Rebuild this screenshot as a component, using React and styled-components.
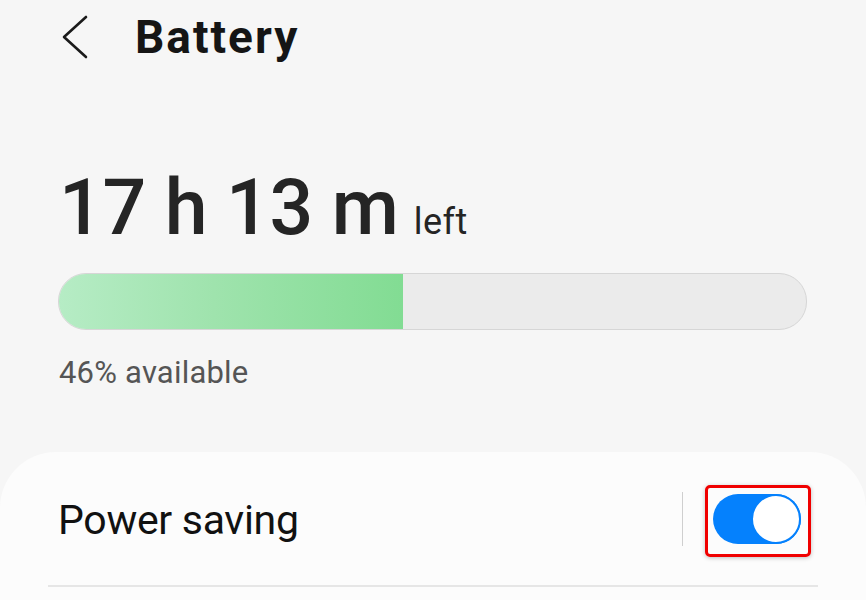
import React from 'react'
import styled, { createGlobalStyle } from 'styled-components'

const GlobalStyle = createGlobalStyle`
html, body {
    margin: 0;
    padding: 0;
    background: #f6f6f6;
    font-family: Roboto, "Liberation Sans", sans-serif;
}
`

const Page = styled.div`
width: 866px;
height: 600px;
overflow: hidden;
display: flex;
flex-direction: column;
background: #f6f6f6;
`

const Header = styled.header`
display: flex;
align-items: center;
height: 74px;
padding-left: 62px;
`

const BackButton = styled.button`
border: 0;
background: none;
padding: 0;
width: 26px;
height: 44px;
display: flex;
align-items: center;
margin-right: 47px;
svg {
    display: block;
}
`

const Title = styled.h1`
margin: 0;
font-size: 46px;
font-weight: 700;
letter-spacing: 2px;
color: #151515;
line-height: 1;
`

const Summary = styled.section`
padding: 96px 58px 0 59px;
`

const Remaining = styled.div`
display: flex;
align-items: baseline;
color: #252525;
line-height: 1;
`

const Big = styled.span`
font-size: 77px;
font-weight: 500;
letter-spacing: -0.3px;
`

const Small = styled.span`
font-size: 36px;
font-weight: 400;
margin-left: 15px;
letter-spacing: 0.5px;
`

const Bar = styled.div`
margin-top: 26px;
height: 55px;
border-radius: 28px;
border: 1px solid #d6d6d6;
background: #ebebeb;
overflow: hidden;
width: 747px;
margin-left: -1px;
`

const Fill = styled.div`
height: 100%;
background: linear-gradient(90deg, #b6ecc5 0%, #9fe3ad 45%, #82dc93 100%);
`

const Available = styled.p`
margin: 24px 0 0;
font-size: 31px;
line-height: 1.2;
color: #555;
letter-spacing: 0.2px;
`

const Card = styled.section`
margin-top: auto;
height: 148px;
background: #fcfcfc;
border-radius: 56px 56px 0 0;
padding: 0 48px;
`

const Row = styled.div`
display: flex;
align-items: center;
height: 133px;
padding: 0 7px 0 10px;
border-bottom: 2px solid #e6e6e6;
`

const Label = styled.span`
flex: 1;
font-size: 41px;
color: #111;
letter-spacing: -0.3px;
padding-top: 3px;
`

const Separator = styled.span`
width: 1px;
height: 54px;
background: #cfcfcf;
margin-right: 22px;
`

const Highlight = styled.div`
padding: 6px 7px 10px 5px;
border: 3px solid #f00000;
border-radius: 5px;
box-shadow: 0 1px 4px rgba(0, 0, 0, 0.25);
display: flex;
margin-top: 4px;
`

const Track = styled.div`
position: relative;
width: 88px;
height: 50px;
border-radius: 25px;
background: ${({ on }) => (on ? '#0581fd' : '#cfcfcf')};
`

const Thumb = styled.span`
position: absolute;
top: 0;
right: ${({ on }) => (on ? '0' : 'auto')};
left: ${({ on }) => (on ? 'auto' : '0')};
width: 50px;
height: 50px;
box-sizing: border-box;
border-radius: 50%;
background: #fff;
border: 2.5px solid #0581fd;
`

const ChevronLeft = () => (
    <svg width="26" height="44" viewBox="0 0 26 44">
        <polyline points="24,2 2,22 24,42" fill="none" stroke="#1a1a1a" strokeWidth="2.6" strokeLinecap="round" strokeLinejoin="round" />
    </svg>
)

const App = () => {
    const level = 46
    return (
        <Page>
            <GlobalStyle />
            <Header>
                <BackButton aria-label="Back">
                    <ChevronLeft />
                </BackButton>
                <Title>Battery</Title>
            </Header>
            <Summary>
                <Remaining>
                    <Big>17 h 13 m</Big>
                    <Small>left</Small>
                </Remaining>
                <Bar>
                    <Fill style={{ width: `${level}%` }} />
                </Bar>
                <Available>{level}% available</Available>
            </Summary>
            <Card>
                <Row>
                    <Label>Power saving</Label>
                    <Separator />
                    <Highlight>
                        <Track on>
                            <Thumb on />
                        </Track>
                    </Highlight>
                </Row>
            </Card>
        </Page>
    )
}

export default App
